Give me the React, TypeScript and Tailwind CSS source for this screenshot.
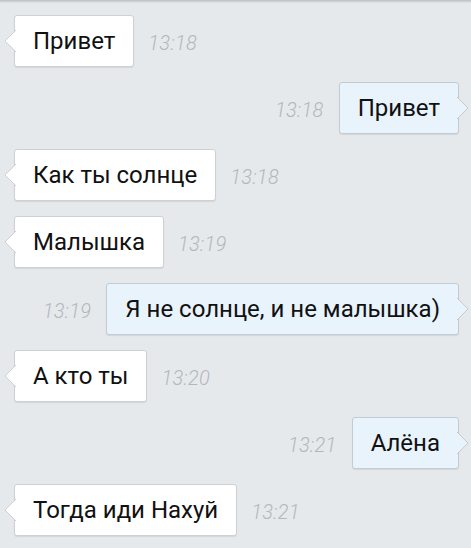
import React from "react";

type Msg = { text: string; time: string; out?: boolean };

const messages: Msg[] = [
  { text: "Привет", time: "13:18" },
  { text: "Привет", time: "13:18", out: true },
  { text: "Как ты солнце", time: "13:18" },
  { text: "Малышка", time: "13:19" },
  { text: "Я не солнце, и не малышка)", time: "13:19", out: true },
  { text: "А кто ты", time: "13:20" },
  { text: "Алёна", time: "13:21", out: true },
  { text: "Тогда иди Нахуй", time: "13:21" },
];

function Tail({ out }: { out?: boolean }) {
  // small arrow pointing to the sender side
  return (
    <svg
      width="12"
      height="22"
      viewBox="0 0 12 22"
      className={
        out
          ? "absolute top-1/2 -translate-y-1/2 right-[-11px]"
          : "absolute top-1/2 -translate-y-1/2 left-[-11px]"
      }
    >
      {out ? (
        <path d="M0 0 L11 11 L0 22" fill="#e8f3fc" stroke="#c3ccd4" strokeWidth="1" />
      ) : (
        <path d="M12 0 L1 11 L12 22" fill="#ffffff" stroke="#cdd1d5" strokeWidth="1" />
      )}
    </svg>
  );
}

function Time({ t }: { t: string }) {
  return (
    <span className="pt-[4px] text-[20px] italic font-light text-[#b3b7bb] tracking-[0.3px]">{t}</span>
  );
}

function Bubble({ m }: { m: Msg }) {
  return (
    <div
      className={
        m.out
          ? "relative h-[52px] flex items-center px-[18px] rounded-[3px] border border-[#c3ccd4] bg-[#e8f3fc] shadow-[0_1px_1px_rgba(0,0,0,0.08)]"
          : "relative h-[52px] flex items-center px-[18px] rounded-[3px] border border-[#cdd1d5] bg-white shadow-[0_1px_1px_rgba(0,0,0,0.08)]"
      }
    >
      <Tail out={m.out} />
      <span className="text-[24px] text-[#111111] leading-none">{m.text}</span>
    </div>
  );
}

export default function App() {
  return (
    <div
      className="w-[471px] h-[548px] overflow-hidden bg-[#e6e9ec]"
      style={{ fontFamily: "Roboto, 'Noto Sans', sans-serif" }}
    >
      <div className="h-[3px] bg-gradient-to-b from-[#b9bdc1] to-[#e6e9ec]" />
      <div className="flex flex-col gap-[15px] pt-[12px]">
        {messages.map((m, i) =>
          m.out ? (
            <div key={i} className="flex items-center justify-end gap-[15px] pr-[12px]">
              <Time t={m.time} />
              <Bubble m={m} />
            </div>
          ) : (
            <div key={i} className="flex items-center gap-[14px] pl-[14px]">
              <Bubble m={m} />
              <Time t={m.time} />
            </div>
          )
        )}
      </div>
    </div>
  );
}
